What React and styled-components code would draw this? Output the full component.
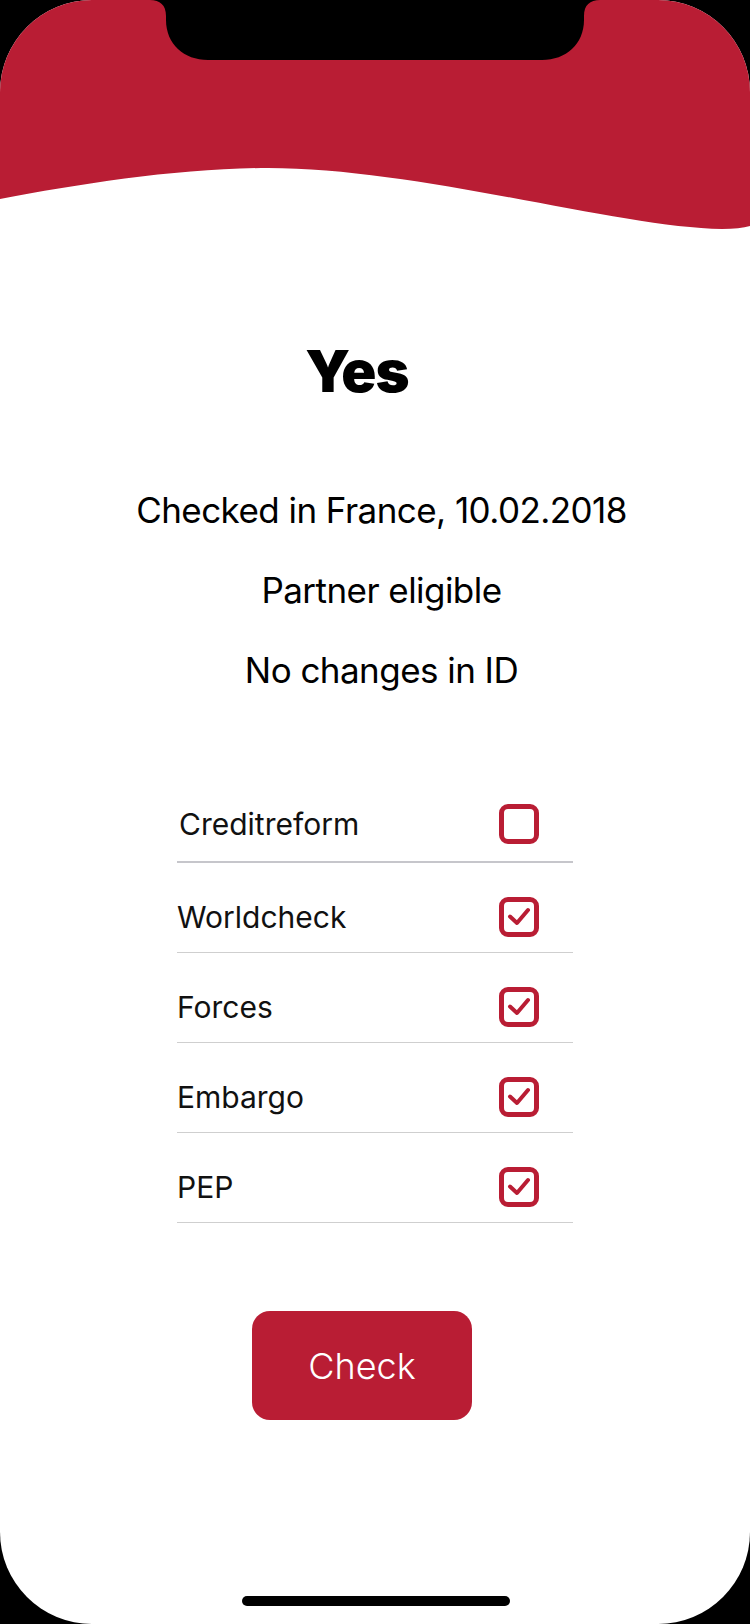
import styled, { createGlobalStyle } from 'styled-components';

const RED = '#b91d34';

const GlobalStyle = createGlobalStyle`
  html, body {
    margin: 0;
    padding: 0;
    background: #000;
  }
  body {
    font-family: Inter, "Liberation Sans", sans-serif;
    -webkit-font-smoothing: antialiased;
  }
`;

const checks = [
  { label: 'Creditreform', checked: false },
  { label: 'Worldcheck', checked: true },
  { label: 'Forces', checked: true },
  { label: 'Embargo', checked: true },
  { label: 'PEP', checked: true },
];

const info = ['Checked in France, 10.02.2018', 'Partner eligible', 'No changes in ID'];

const Wave = () => (
  <Header viewBox="0 0 750 232" preserveAspectRatio="none">
    <path
      d="M0,0 H750 V226 Q740,229 722,229 C620,228 420,168 268,168 C180,168 80,184 0,199 Z"
      fill={RED}
    />
  </Header>
);

const CheckBox = ({ checked }) => (
  <Box>
    {checked && (
      <svg width="29" height="29" viewBox="0 0 29 29">
        <path
          d="M5,13.5 L12,20 L23,7"
          fill="none"
          stroke={RED}
          strokeWidth="4"
          strokeLinecap="round"
          strokeLinejoin="round"
        />
      </svg>
    )}
  </Box>
);

const App = () => {
  return (
    <>
      <GlobalStyle />
      <Screen>
        <Wave />
        <Title>Yes</Title>

        <InfoList>
          {info.map((line) => (
            <InfoLine key={line}>{line}</InfoLine>
          ))}
        </InfoList>

        <CheckList>
          {checks.map((item, i) => (
            <Row key={item.label} $first={i === 0}>
              <Label>{item.label}</Label>
              <CheckBox checked={item.checked} />
            </Row>
          ))}
        </CheckList>

        <ButtonRow>
          <Button type="button">Check</Button>
        </ButtonRow>

        <Notch viewBox="0 0 750 62">
          <path
            d="M150,0 C160,0 166,5 166,16 L166,20 C166,44 184,60 208,60 L542,60 C566,60 584,44 584,20 L584,16 C584,5 590,0 600,0 Z"
            fill="#000"
          />
        </Notch>
        <HomeIndicator />
      </Screen>
    </>
  );
};

const Screen = styled.div`
  position: relative;
  width: 750px;
  height: 1624px;
  background: #fff;
  border-radius: 92px;
  overflow: hidden;
  display: flex;
  flex-direction: column;
`;

const Header = styled.svg`
  display: block;
  width: 750px;
  height: 232px;
  flex-shrink: 0;
`;

const Title = styled.h1`
  margin: 104px 0 0;
  padding-right: 36px;
  text-align: center;
  font-size: 58px;
  line-height: 70px;
  font-weight: 900;
  letter-spacing: -1px;
  color: #000;
`;

const InfoList = styled.div`
  margin-top: 64px;
  padding-left: 13px;
  display: flex;
  flex-direction: column;
  align-items: center;
`;

const InfoLine = styled.p`
  margin: 0;
  font-size: 35px;
  line-height: 80px;
  font-weight: 400;
  letter-spacing: -0.55px;
  color: #000;
`;

const CheckList = styled.ul`
  list-style: none;
  width: 396px;
  margin: 60px auto 0;
  padding: 0;
`;

const Row = styled.li`
  display: flex;
  align-items: center;
  justify-content: space-between;
  padding: ${(p) => (p.$first ? '34px 34px 17px 2px' : '34px 34px 15px 0')};
  border-bottom: ${(p) => (p.$first ? '2.5px solid #c6c6cb' : '1px solid #cfcfcf')};
`;

const Label = styled.span`
  font-size: 30px;
  line-height: 40px;
  color: #111;
`;

const Box = styled.span`
  box-sizing: border-box;
  width: 40px;
  height: 40px;
  border: 5.5px solid ${RED};
  border-radius: 9px;
  display: flex;
  align-items: center;
  justify-content: center;
`;

const ButtonRow = styled.div`
  margin-top: 88px;
  padding-right: 26px;
  display: flex;
  justify-content: center;
`;

const Button = styled.button`
  width: 220px;
  height: 109px;
  border: none;
  border-radius: 18px;
  background: ${RED};
  color: #fff;
  font-family: Inter, "Liberation Sans", sans-serif;
  font-size: 36px;
  font-weight: 300;
  cursor: pointer;
`;

const Notch = styled.svg`
  position: absolute;
  top: 0;
  left: 0;
  width: 750px;
  height: 62px;
`;

const HomeIndicator = styled.div`
  position: absolute;
  left: 242px;
  bottom: 18px;
  width: 268px;
  height: 10px;
  border-radius: 5px;
  background: #000;
`;

export default App;
